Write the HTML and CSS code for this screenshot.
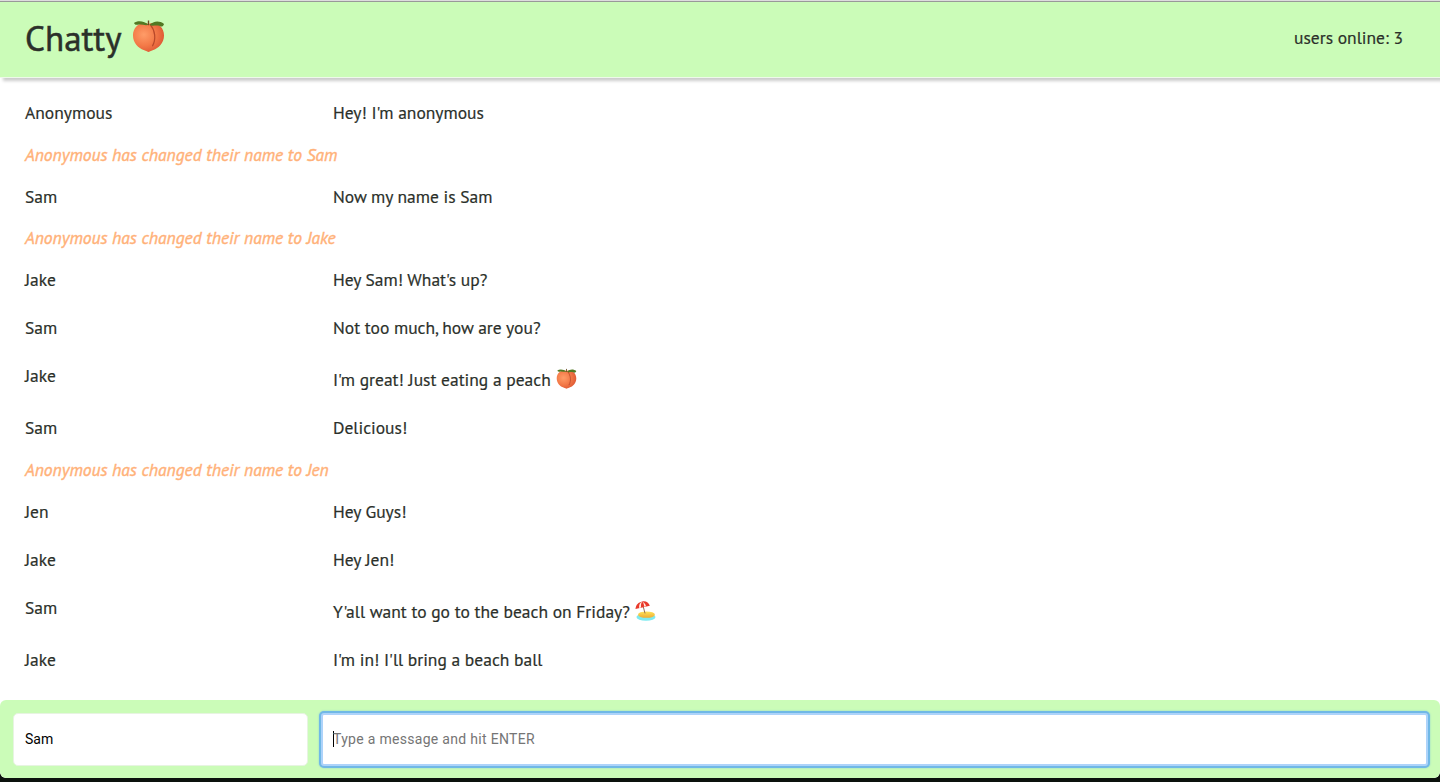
FILE: index.html
```html
<!DOCTYPE html>
<html lang="en">
<head>
<meta charset="utf-8">
<title>Chatty</title>
<link rel="stylesheet" href="styles.css">
</head>
<body>
<svg class="defs" width="0" height="0" aria-hidden="true">
  <defs>
    <radialGradient id="skin" cx=".35" cy=".4" r=".75"><stop offset="0" stop-color="#ff9c68"/><stop offset=".5" stop-color="#f37a48"/><stop offset="1" stop-color="#d9502f"/></radialGradient>
    <linearGradient id="sand" x1="0" y1="0" x2="0" y2="1"><stop offset="0" stop-color="#ffe45b"/><stop offset="1" stop-color="#efab31"/></linearGradient>
    <symbol id="peach" viewBox="0 0 34 36">
      <path d="M17 5C9 2 1 8 1 17c0 8 6 13 11 15 3 1 4 2 5 2s2-1 5-2c5-2 11-7 11-15C33 8 25 2 17 5Z" fill="url(#skin)"/>
      <path d="M19 6c5 6 6 15 2 22" fill="none" stroke="#b8482a" stroke-width="1.3"/>
      <path d="M17 6C13 2 6 1 2 4c1 2 2 2 4 2 4-1 7 1 11 0ZM18 6c4-4 10-5 15-1-1 3-3 3-5 2-4-1-7 1-10-1Z" fill="#527923"/>
      <path d="M17 1.500v5" stroke="#6b4a22" stroke-width="1.400"/>
    </symbol>
    <symbol id="beach" viewBox="0 0 22 22">
      <ellipse cx="11.500" cy="17.300" rx="10" ry="3.900" fill="#7eeaf0"/>
      <ellipse cx="12" cy="14.800" rx="8.800" ry="3.400" fill="url(#sand)"/>
      <path d="m8 4 2.500 9.500" stroke="#8f6751" stroke-width="1"/>
      <path d="M.5 9C1 4 3.500 2 7.500 1c4-.8 7 1.500 8 4.500Z" fill="#e9392b"/>
      <path d="M4.300 7.900C4 4.500 5 2.500 7.500 1c2.200 1 3.500 3 4 5Z" fill="#fff0e5"/>
      <path d="M6.300 7.400C6 4.500 6.500 2.500 7.500 1c1.400 1.300 2 3.300 2.200 5.500Z" fill="#e9392b"/>
    </symbol>
  </defs>
</svg>
<div class="app">
  <header class="navbar">
    <h1 class="brand"><span class="brand-text">Chatty</span><svg class="brand-icon"><use href="#peach"/></svg></h1>
    <span class="users">users online: 3</span>
  </header>
  <main class="messages">
    <div class="message"><span class="name">Anonymous</span><span>Hey! I'm anonymous</span></div>
    <div class="system">Anonymous has changed their name to Sam</div>
    <div class="message"><span class="name">Sam</span><span>Now my name is Sam</span></div>
    <div class="system short">Anonymous has changed their name to Jake</div>
    <div class="message"><span class="name">Jake</span><span>Hey Sam! What's up?</span></div>
    <div class="message"><span class="name">Sam</span><span>Not too much, how are you?</span></div>
    <div class="message tall"><span class="name">Jake</span><span>I'm great! Just eating a peach</span><svg class="emoji"><use href="#peach"/></svg></div>
    <div class="message"><span class="name">Sam</span><span>Delicious!</span></div>
    <div class="system">Anonymous has changed their name to Jen</div>
    <div class="message"><span class="name">Jen</span><span>Hey Guys!</span></div>
    <div class="message"><span class="name">Jake</span><span>Hey Jen!</span></div>
    <div class="message tall"><span class="name">Sam</span><span>Y'all want to go to the beach on Friday?</span><svg class="emoji"><use href="#beach"/></svg></div>
    <div class="message"><span class="name">Jake</span><span>I'm in! I'll bring a beach ball</span></div>
  </main>
  <footer class="chatbar">
    <div class="field username">Sam</div>
    <div class="field compose"><span class="caret"></span><span class="placeholder">Type a message and hit ENTER</span></div>
  </footer>
</div>
</body>
</html>
```
FILE: styles.css
```css
* { box-sizing: border-box; }
body { margin: 0; background: #0c120d; font-family: "PT Sans", "Noto Sans", sans-serif; font-size: 17.5px; color: #2b302a; -webkit-text-stroke: .2px; }
.defs { position: absolute; }
.app { height: 778px; display: flex; flex-direction: column; background: #fff; border-top: 1px solid #ddd; border-radius: 0 0 6px 6px; overflow: hidden; }
.navbar { height: 77px; flex: none; display: flex; justify-content: space-between; padding: 0 37px 0 25px; background: #cbfcb8; border-top: 1px solid #999; border-bottom: 1px solid #eef8ea; box-shadow: 3px 3px 3px #ccc; line-height: 73px; white-space: nowrap; }
.brand { margin: 0; display: flex; font-size: 35px; font-weight: 400; -webkit-text-stroke: .5px; }
.brand-icon { width: 33px; height: 35px; margin: 17px 0 0 10px; }
.users { line-height: 71px; }
.messages { flex: 1; padding-top: 11px; white-space: nowrap; }
.message { display: flex; height: 48px; padding-left: 25px; line-height: 48px; }
.message.tall { height: 52px; line-height: 56px; }
.name { width: 308px; flex: none; line-height: 48px; }
.system { height: 36px; padding-left: 25px; line-height: 36px; font-style: italic; color: #ffb178; -webkit-text-stroke: .4px; }
.system.short { height: 35px; line-height: 34px; }
.emoji { width: 21px; height: 22px; margin: 16px 0 0 5px; }
.chatbar { height: 78px; flex: none; display: flex; gap: 13px; padding: 13px 12px 12px 13px; background: #cbfcb8; border-radius: 6px; font-family: Roboto, sans-serif; font-size: 14px; letter-spacing: .3px; line-height: 51px; -webkit-text-stroke: 0; }
.field { border: 1px solid #e7f4e1; border-radius: 5px; background: #fff; padding-left: 11px; color: #000; }
.username { width: 295px; flex: none; letter-spacing: 0; }
.compose { flex: 1; display: flex; border: 2px solid #add3fa; border-radius: 3px; box-shadow: 0 0 0 2px #70b8e6, 0 0 2px 2px #8dccd5; line-height: 49px; padding-left: 10px; }
.caret { width: 1px; height: 16px; background: #000; margin-top: 16px; }
.placeholder { color: #757575; margin-left: -1px; }
```
